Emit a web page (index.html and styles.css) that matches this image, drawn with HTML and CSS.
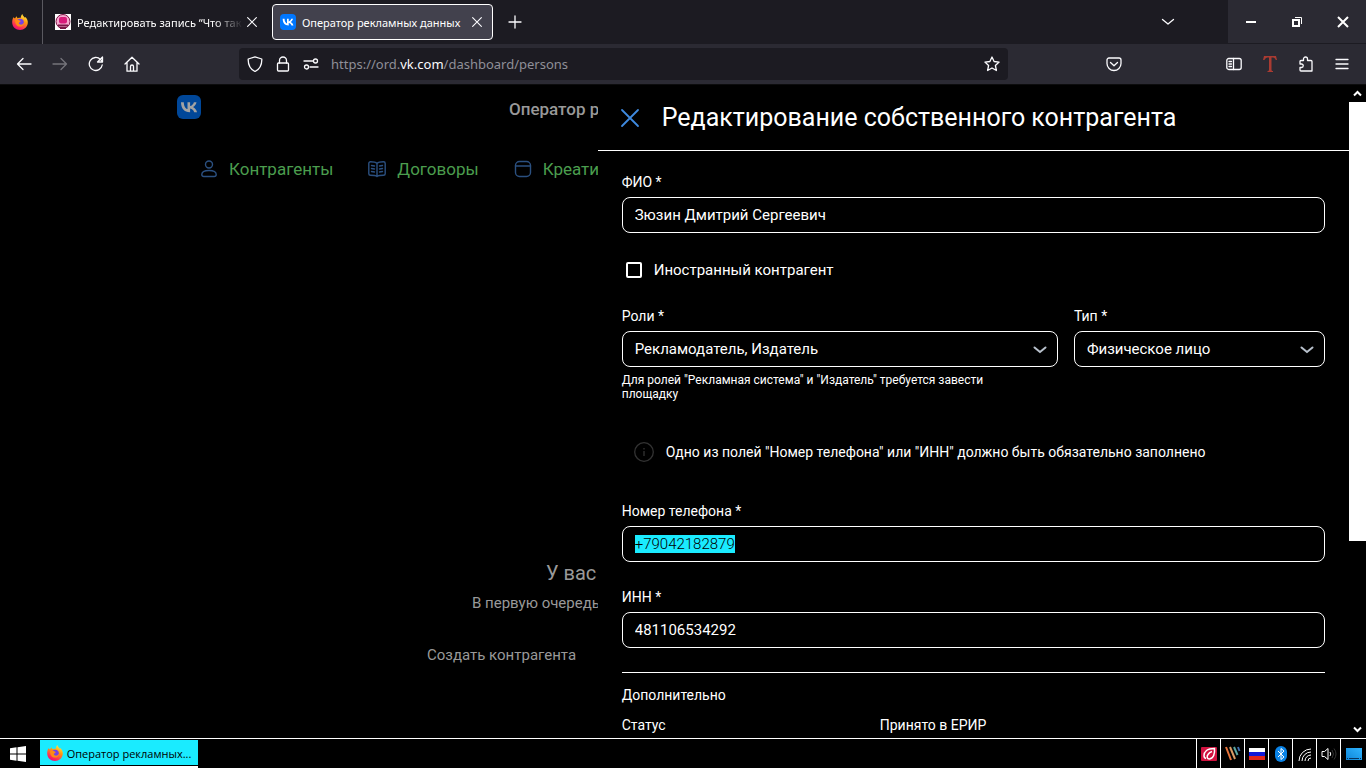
FILE: index.html
```html
<!DOCTYPE html>
<html lang="ru">
<head>
<meta charset="utf-8">
<meta name="viewport" content="width=device-width, initial-scale=1">
<title>Оператор рекламных данных</title>
<link rel="stylesheet" href="styles.css">
</head>
<body>
<svg class="defs" aria-hidden="true">
  <defs>
    <linearGradient id="fox" x1="0.8" y1="0" x2="0.3" y2="1">
      <stop offset="0" stop-color="#fff44f"/><stop offset="0.4" stop-color="#ff980e"/><stop offset="0.75" stop-color="#ff3750"/><stop offset="1" stop-color="#eb0878"/>
    </linearGradient>
    <linearGradient id="screen" x1="0" y1="1" x2="1" y2="0">
      <stop offset="0" stop-color="#0f86d8"/><stop offset="1" stop-color="#2fb4ff"/>
    </linearGradient>
    <symbol id="firefox" viewBox="0 0 16 16">
      <path d="M1.4 3.2 3 4.6 4.4 2.2 5.6 4.2C7 3.6 8 3.6 8.8 3.8 8.8 2.4 9.4 1 10.4 0 10.6 1.8 12 2.6 13 3.8L13.4 3C15 4.6 16 6.6 15.8 9 15.4 13 12.2 16 8 16 3.8 16 .4 13 .2 8.8.1 6.6.6 4.8 1.4 3.2z" fill="url(#fox)"/>
      <circle cx="8.2" cy="8.4" r="3.6" fill="#7542e5"/>
      <path d="M3 6.2C5 5 6.4 5.8 7.6 6.6 9 6.8 9 7.8 7.6 8.2 6.4 8.600 6.600 10 8.200 10.600 10 11 11.400 9.800 12.200 8.400 12.200 11 10.400 12.600 8 12.600 5 12.600 3 10 3 6.200z" fill="#ff8a16"/>
    </symbol>
    <symbol id="vk" viewBox="0 0 24 24">
      <rect class="vk-tile" width="24" height="24" rx="6"/>
      <path class="vk-mark" d="M12.8 17.2C7.3 17.2 4.1 13.4 4 7.2h2.8c.1 4.5 2.1 6.5 3.7 6.9V7.2h2.6v3.9c1.6-.2 3.2-2 3.8-3.9h2.6c-.4 2.4-2.2 4.2-3.5 4.9 1.3.6 3.3 2.2 4.1 5.1h-2.9c-.6-1.9-2.2-3.4-4.1-3.6v3.6z"/>
    </symbol>
    <symbol id="cross" viewBox="0 0 16 16"><path d="M3 3l10 10M13 3 3 13"/></symbol>
    <symbol id="chevron" viewBox="0 0 16 16"><path d="M2.500 5.500 8 10l5.500-4.500"/></symbol>
  </defs>
</svg>

<header class="browser">
  <div class="tabs">
    <div class="pinned"><svg class="ico" aria-hidden="true"><use href="#firefox"/></svg></div>
    <div class="tab">
      <svg class="ico" viewBox="0 0 16 16" aria-hidden="true"><rect width="16" height="16" fill="#fff"/><circle cx="8" cy="7.500" r="7" fill="#f7a9cf" stroke="#7a1646"/><rect x="4" y="3" width="8" height="6.500" rx="2" fill="#d81b7a"/><path d="M3 11.500h10M5 14h6" stroke="#7a1646" stroke-width="2"/></svg>
      <span class="tab-title fade">Редактировать запись “Что так</span>
      <button class="tab-close" aria-label="Закрыть вкладку"><svg class="ico line"><use href="#cross"/></svg></button>
    </div>
    <div class="tab active">
      <svg class="ico vk" aria-hidden="true"><use href="#vk"/></svg>
      <span class="tab-title">Оператор рекламных данных</span>
      <button class="tab-close" aria-label="Закрыть вкладку"><svg class="ico line"><use href="#cross"/></svg></button>
    </div>
    <button class="new-tab" aria-label="Новая вкладка"><svg class="ico line" viewBox="0 0 16 16"><path d="M8 2v12M2 8h12"/></svg></button>
    <button class="all-tabs" aria-label="Список вкладок"><svg class="ico line"><use href="#chevron"/></svg></button>
    <div class="window-buttons">
      <button aria-label="Свернуть"><svg class="ico" viewBox="0 0 16 16"><path d="M3 8h10" stroke="#fff" stroke-width="2"/></svg></button>
      <button aria-label="Восстановить"><svg class="ico" viewBox="0 0 16 16" fill="none" stroke="#fff"><rect x="4" y="6" width="6" height="6" stroke-width="2"/><path d="M6 3.500h6.500V10"/></svg></button>
      <button aria-label="Закрыть"><svg class="ico" viewBox="0 0 16 16"><path d="M3 3l10 10M13 3 3 13" stroke="#fff" stroke-width="2"/></svg></button>
    </div>
  </div>
  <div class="toolbar">
    <nav class="nav-buttons" aria-label="Навигация">
      <button aria-label="Назад"><svg class="ico line" viewBox="0 0 16 16"><path d="M15 8H1.500M7 2.500 1.500 8 7 13.500"/></svg></button>
      <button aria-label="Вперёд" disabled><svg class="ico line" viewBox="0 0 16 16"><path d="M1 8h13.500M9 2.500 14.500 8 9 13.500"/></svg></button>
      <button aria-label="Обновить"><svg class="ico line" viewBox="0 0 16 16"><path d="M14.200 9A6.500 6.500 0 1 1 12.500 3.500L14 5M14.500 1v5h-5z"/></svg></button>
      <button aria-label="Домой"><svg class="ico line" viewBox="0 0 16 16"><path d="M1 8l7-6.800L15 8M3 6.500v8.700h10V6.500M6.500 15v-4.500a1.500 1.500 0 0 1 3 0V15"/></svg></button>
    </nav>
    <div class="address">
      <svg class="ico line" viewBox="0 0 16 16"><path d="M8 .8 14.800 3C15 9 13 13 8 15.500 3 13 1 9 1.200 3z"/></svg>
      <svg class="ico line" viewBox="0 0 16 16"><path d="M4.500 7V4.500a3.500 3.500 0 0 1 7 0V7"/><rect x="2.500" y="7" width="11" height="8" rx="1"/></svg>
      <svg class="ico line" viewBox="0 0 16 16"><path d="M1 5h9M7 11h8"/><circle cx="12.500" cy="5" r="2"/><circle cx="3.500" cy="11" r="2"/></svg>
      <span class="url">https://ord.<b>vk.com</b>/dashboard/persons</span>
      <svg class="ico line" viewBox="0 0 16 16"><path d="M8 1l2.100 4.500 5 .6-3.700 3.400 1 5L8 12l-4.400 2.500 1-5L.9 6.100l5-.6z"/></svg>
    </div>
    <div class="tools">
      <button class="pocket" aria-label="Pocket"><svg class="ico line" viewBox="0 0 16 16"><path d="M3 2h10a2 2 0 0 1 2 2v3.500a7 7 0 0 1-14 0V4a2 2 0 0 1 2-2zM4.500 6.500 8 9.800l3.500-3.300"/></svg></button>
      <button aria-label="Боковая панель"><svg class="ico line" viewBox="0 0 16 16"><rect x=".8" y="2.500" width="14.400" height="11" rx="2"/><path d="M7.500 2.500v11M3 5.500h2.500M3 8h2.500M3 10.500h2.500"/></svg></button>
      <button aria-label="Расширение T"><svg class="ico" viewBox="0 0 16 16"><path d="M2 0h12l1 4h-1.200C13 2 12 1.500 9.500 1.500v12c0 1 .5 1.500 1.500 1.500v1H5.500v-1C6.500 15 7 14.500 7 13.500v-12C4.500 1.500 3.500 2 2.400 4H1z" fill="#a93b32"/></svg></button>
      <button aria-label="Расширения"><svg class="ico line" viewBox="0 0 16 16"><path d="M5.500 4.500V3a2 2 0 0 1 4 0v1.500H13a1 1 0 0 1 1 1V15H3a1 1 0 0 1-1-1v-2.500h1.500a1.700 1.700 0 0 0 0-3.500H2V5.500a1 1 0 0 1 1-1z"/></svg></button>
      <button aria-label="Меню"><svg class="ico line" viewBox="0 0 16 16"><path d="M2 3.500h12M2 8h12M2 12.500h12"/></svg></button>
    </div>
  </div>
</header>

<div class="viewport">
  <section class="dashboard">
    <div class="brand">
      <svg class="logo vk" role="img" aria-label="VK"><use href="#vk"/></svg>
      <span class="brand-title">Оператор рекламных</span>
    </div>
    <nav class="sections">
      <a href="#persons"><svg class="ico-lg" viewBox="0 0 20 20"><circle cx="10" cy="5.500" r="3.500"/><path d="M2.800 15.500c0-3 3.500-4 7.200-4s7.200 1 7.200 4c0 1.500-.7 2-2 2H4.800c-1.300 0-2-.5-2-2z"/></svg>Контрагенты</a>
      <a href="#contracts"><svg class="ico-lg" viewBox="0 0 20 20"><path d="M10 4.500C8.500 3 6 2.800 3.500 2.800A1.700 1.700 0 0 0 1.800 4.500v10.300c0 1 .7 1.500 1.700 1.500 2.500 0 5 0 6.500 1.200 1.500-1.200 4-1.200 6.500-1.200 1 0 1.700-.5 1.700-1.500V4.500a1.700 1.700 0 0 0-1.700-1.700C14 2.800 11.500 3 10 4.500zM10 4.500v13M4.500 6.500l3 .5M4.500 9.500l3 .5M4.500 12.500l3 .5M15.500 6.500l-3 .5M15.500 9.500l-3 .5M15.500 12.500l-3 .5"/></svg>Договоры</a>
      <a href="#creatives"><svg class="ico-lg" viewBox="0 0 20 20"><rect x="2.500" y="2.500" width="15" height="15" rx="4"/><path d="M2.500 7h15"/></svg>Креативы</a>
    </nav>
    <div class="empty">
      <h2>У вас</h2>
      <p>В первую очередь</p>
      <button>Создать контрагента</button>
    </div>
  </section>

  <main class="drawer">
    <div class="drawer-head">
      <button class="close" aria-label="Закрыть"><svg viewBox="0 0 20 20"><path d="M2 2l16 16M18 2 2 18"/></svg></button>
      <h1>Редактирование собственного контрагента</h1>
    </div>
    <form class="form">
      <div class="field">
        <label for="name">ФИО *</label>
        <div class="box"><input id="name" type="text" value="Зюзин Дмитрий Сергеевич"></div>
      </div>
      <label class="check"><input type="checkbox">Иностранный контрагент</label>
      <div class="pair">
        <div class="field">
          <label for="roles">Роли *</label>
          <div class="box"><select id="roles"><option>Рекламодатель, Издатель</option></select><svg class="arrow" aria-hidden="true"><use href="#chevron"/></svg></div>
          <p class="hint">Для ролей "Рекламная система" и "Издатель" требуется завести площадку</p>
        </div>
        <div class="field">
          <label for="type">Тип *</label>
          <div class="box"><select id="type"><option>Физическое лицо</option></select><svg class="arrow" aria-hidden="true"><use href="#chevron"/></svg></div>
        </div>
      </div>
      <p class="notice"><svg viewBox="0 0 20 20" aria-hidden="true"><circle cx="10" cy="10" r="9.300"/><path d="M10 9v5M10 6v1.500"/></svg>Одно из полей "Номер телефона" или "ИНН" должно быть обязательно заполнено</p>
      <div class="field phone">
        <label for="phone">Номер телефона *</label>
        <div class="box"><input id="phone" class="marked" type="tel" size="12" value="+79042182879"></div>
      </div>
      <div class="field">
        <label for="inn">ИНН *</label>
        <div class="box"><input id="inn" type="text" value="481106534292"></div>
      </div>
      <div class="extra">
        <p>Дополнительно</p>
        <div class="facts"><span>Статус</span><span>Принято в ЕРИР</span></div>
      </div>
    </form>
  </main>

  <div class="scrollbar" aria-hidden="true">
    <svg viewBox="0 0 17 17"><path d="M5 10.500 8.500 7l3.500 3.500"/></svg>
    <div class="track"><div class="thumb"></div></div>
    <svg viewBox="0 0 17 17"><path d="M5 6.500 8.500 10 12 6.500"/></svg>
  </div>
</div>

<footer class="taskbar">
  <button class="start" aria-label="Пуск"><svg class="ico" viewBox="0 0 16 16" fill="#fff"><path d="M0 2.200 6.500 1.300v6.200H0zM7.500 1.200 16 0v7.500H7.500zM0 8.500h6.500v6.200L0 13.800zM7.500 8.500H16V16l-8.500-1.200z"/></svg></button>
  <button class="task"><svg class="ico" aria-hidden="true"><use href="#firefox"/></svg>Оператор рекламных...</button>
  <div class="tray">
    <span><svg class="ico" viewBox="0 0 16 16"><rect y="1" width="16" height="14" rx="1" fill="#d1123f"/><path d="M5 12.500C2.500 12 2 7.500 5.500 4.500 8 2.500 11 2.500 13.500 2.500c.5 5-1 10-5 10.500-2.500.2-3-2.500-1.500-4.500 1-1.500 2.500-2.500 4-3" fill="none" stroke="#fff" stroke-width="1.500"/></svg></span>
    <span><svg class="ico" viewBox="0 0 16 16" fill="none" stroke-width="2"><path d="M1 1l5 13" stroke="#e8743b"/><path d="M5 1l5 12" stroke="#d99a63"/><path d="M9 1l3.500 8" stroke="#5aa6a0"/><path d="M13 1l1.500 4" stroke="#3f6fae"/></svg></span>
    <span><svg class="ico" viewBox="0 0 16 16"><path d="M0 2h16v4H0z" fill="#fff"/><path d="M0 6h16v4H0z" fill="#1018d8"/><path d="M0 10h16v4H0z" fill="#e0251b"/></svg></span>
    <span><svg class="ico" viewBox="0 0 16 16"><rect x="2" width="12" height="16" rx="6" fill="#0a84e8"/><path d="M5 5l6 6-3 2.500v-11L11 5l-6 6" fill="none" stroke="#fff"/></svg></span>
    <span><svg class="ico" viewBox="0 0 16 16" fill="none" stroke="#fff"><path d="M2 15A12 12 0 0 1 14 3M5 15a9 9 0 0 1 9-9M8 15a6 6 0 0 1 6-6M11 15a3 3 0 0 1 3-3"/></svg></span>
    <span><svg class="ico" viewBox="0 0 16 16" fill="none" stroke="#fff"><path d="M1 5.500h2.500L7 2.500v11l-3.500-3H1zM9 6q1.500 2 0 4"/><path d="M11 4q3 4 0 8M13 2.500q4 5.500 0 11" stroke="#333"/></svg></span>
    <span><svg class="ico" viewBox="0 0 16 16"><rect y="2" width="16" height="12" fill="url(#screen)"/><path d="M1 12.500h1M3 12.500h10M14 12.500h1" stroke="#07335c"/></svg></span>
  </div>
</footer>
</body>
</html>
```

FILE: styles.css
```css
* { box-sizing: border-box; }

body {
  margin: 0;
  height: 100vh;
  display: flex;
  flex-direction: column;
  overflow: hidden;
  background: #000;
  color: #fff;
  font-family: "Roboto", "Liberation Sans", sans-serif;
}

h1, h2, p { margin: 0; font-weight: 400; }

button, input, select {
  margin: 0;
  padding: 0;
  border: 0;
  background: none;
  color: inherit;
  font: inherit;
}

button { display: flex; align-items: center; justify-content: center; }

.defs { position: absolute; width: 0; height: 0; }
.ico { width: 16px; height: 16px; flex: none; display: block; }
.line { fill: none; stroke: #fbfbfe; stroke-width: 1.3; stroke-linejoin: round; stroke-linecap: round; }
.vk { --tile: #07f; --mark: #fff; }
.vk-tile { fill: var(--tile); }
.vk-mark { fill: var(--mark); }

/* Browser chrome */
.browser { flex: none; font-family: "Noto Sans", "Open Sans", sans-serif; font-size: 11px; }
.tabs { display: flex; height: 44px; background: #1c1b22; }
.pinned {
  width: 43px;
  display: flex;
  align-items: center;
  justify-content: center;
  border-right: 1px solid #5a5960;
  padding-right: 2px;
}
.tab {
  display: flex;
  align-items: center;
  width: 221px;
  margin: 4px 0 4px 4px;
  padding: 0 6px 0 7px;
  border: 1px solid transparent;
  border-radius: 4px;
}
.tab.active { background: #42414d; border-color: #fff; }
.tab-title { flex: 1; margin-left: 6px; overflow: hidden; white-space: nowrap; }
.fade { mask-image: linear-gradient(90deg, #000 82%, transparent); }
.tab-close { width: 18px; height: 20px; }
.tab-close .ico { width: 14px; height: 14px; }
.new-tab { width: 43px; }
.all-tabs { width: 40px; margin: 0 40px 0 auto; }
.window-buttons { display: flex; height: 43px; background: #2b2a33; }
.window-buttons button { width: 46px; }

.toolbar { display: flex; align-items: center; height: 41px; background: #2b2a33; border-bottom: 1px solid #0c0c0d; }
.nav-buttons { display: flex; padding-left: 6px; width: 239px; }
.nav-buttons button { width: 36px; height: 32px; }
.nav-buttons button:disabled { opacity: .35; }
.address {
  flex: 1;
  display: flex;
  align-items: center;
  gap: 12px;
  height: 32px;
  padding: 0 8px;
  border-radius: 4px;
  background: #1c1b22;
}
.url { flex: 1; color: #8f8f98; font-size: 13px; }
.url b { color: #fbfbfe; font-weight: 400; }
.tools { display: flex; width: 358px; padding-right: 6px; }
.tools button { width: 36px; height: 32px; }
.tools .pocket { margin: 0 84px 0 88px; }

/* Page area */
.viewport { flex: 1; display: flex; min-height: 0; }

.dashboard { flex: 1; min-width: 0; display: flex; flex-direction: column; overflow: hidden; white-space: nowrap; color: #999; }
.brand { display: flex; align-items: center; padding: 10px 0 0 177px; }
.logo { width: 24px; height: 24px; flex: none; }
.brand .vk { --tile: #004799; --mark: #a3a3a3; }
.brand-title { margin-left: 308px; padding-top: 4px; font-size: 17px; line-height: 20px; font-weight: 500; }
.sections { display: flex; gap: 34px; padding: 38px 0 0 199px; }
.sections a { display: flex; align-items: center; gap: 10px; color: #4b9d4e; font-size: 17px; line-height: 24px; font-weight: 400; text-decoration: none; }
.ico-lg { width: 20px; height: 20px; flex: none; fill: none; stroke: #2b5080; stroke-width: 1.4; stroke-linecap: round; }
.empty { margin-top: auto; padding: 0 0 73px 427px; }
.empty h2 { padding-left: 119px; font-size: 20px; line-height: 28px; }
.empty p { padding: 6px 0 0 45px; font-size: 15px; line-height: 20px; }
.empty button { margin-top: 32px; font-size: 15px; line-height: 20px; }

.drawer { flex: none; width: 55%; min-width: 0; overflow: hidden; }
.drawer-head { display: flex; align-items: center; gap: 22px; height: 66px; padding: 0 22px; border-bottom: 1px solid #fff; }
.close svg { width: 20px; height: 20px; fill: none; stroke: #3f8ae0; stroke-width: 1.8; stroke-linecap: round; }
.drawer-head h1 { font-size: 25px; line-height: 32px; }
.form { padding: 22px 24px 0; font-size: 14px; line-height: 18px; }
.field { display: flex; flex-direction: column; }
.field > label { margin-bottom: 6px; }
.box {
  position: relative;
  display: flex;
  align-items: center;
  height: 36px;
  padding: 0 12px;
  border: 1px solid #fff;
  border-radius: 8px;
  font-size: 15px;
}
.box input, .box select { flex: 1; min-width: 0; height: 18px; line-height: 18px; outline: 0; }
.box select { appearance: none; padding-right: 24px; }
.box .marked { flex: none; field-sizing: content; background: #1aebff; color: #000; font-weight: 300; }
.arrow { position: absolute; right: 9px; top: 10px; width: 16px; height: 16px; fill: none; stroke: #b8c1cc; stroke-width: 2; stroke-linecap: round; pointer-events: none; }
.check { display: flex; align-items: center; gap: 12px; margin: 27px 0 27px 4px; font-size: 15px; line-height: 20px; }
.check input { appearance: none; width: 16px; height: 16px; border: 2px solid #fff; border-radius: 2px; }
.pair { display: grid; grid-template-columns: 436fr 251fr; gap: 16px; }
.hint { padding: 6px 40px 0 0; font-size: 12px; line-height: 14px; }
.notice { display: flex; align-items: center; gap: 12px; margin: 41px 0 40px 12px; line-height: 20px; }
.notice svg { width: 20px; height: 20px; fill: none; stroke: #333; stroke-width: 1.3; }
.phone { margin-bottom: 26px; }
.extra { margin-top: 24px; padding-top: 13px; border-top: 1px solid #fff; }
.facts { display: grid; grid-template-columns: 258px 1fr; margin-top: 12px; }

.scrollbar { flex: none; width: 17px; display: flex; flex-direction: column; }
.scrollbar svg { width: 17px; height: 17px; flex: none; fill: none; stroke: #fff; stroke-width: 2; }
.track { flex: 1; }
.thumb { height: 71%; background: #fff; }

/* Taskbar */
.taskbar { flex: none; display: flex; height: 30px; border-top: 1px solid #fff; font-family: "Open Sans", "Noto Sans", sans-serif; font-size: 11px; }
.start { width: 36px; margin-right: 4px; }
.task { gap: 4px; width: 158px; height: 28px; margin-top: 1px; background: #1aebff; color: #000; border-bottom: 2px solid #fff; box-shadow: inset 0 -1px #000; white-space: nowrap; }
.tray { display: flex; margin-left: auto; }
.tray span { display: flex; align-items: center; justify-content: center; width: 24px; border-left: 1px solid #fff; }
.tray span:last-child { width: 26px; }
```
